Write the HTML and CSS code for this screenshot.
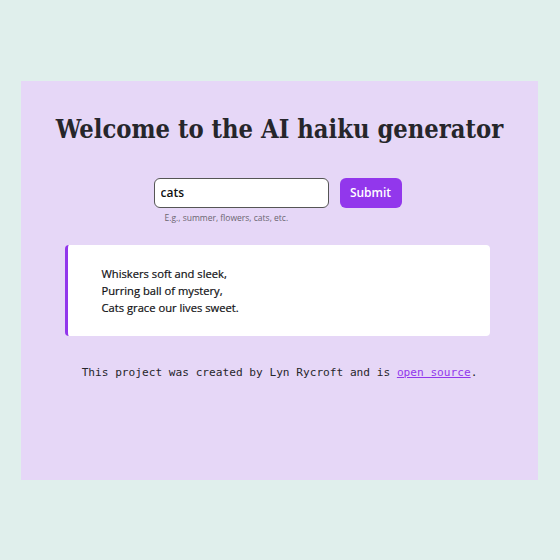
FILE: index.html
```html
<!DOCTYPE html>
<html>
<head>
<meta charset="utf-8">
<link rel="stylesheet" href="styles.css">
</head>
<body>
<main class="panel">
  <h1 class="title">Welcome to the AI haiku generator</h1>
  <form class="form">
    <div class="field">
      <input class="input" type="text" value="cats">
      <span class="hint">E.g., summer, flowers, cats, etc.</span>
    </div>
    <button class="submit" type="button">Submit</button>
  </form>
  <section class="card">
    <p class="haiku">Whiskers soft and sleek,<br>Purring ball of mystery,<br>Cats grace our lives sweet.</p>
  </section>
  <p class="footer">This project was created by Lyn Rycroft and is <a href="#" class="link">open source</a>.</p>
</main>
</body>
</html>
```
FILE: styles.css
```css
html, body { margin: 0; padding: 0; }
body {
  background: #e0efec;
  min-height: 560px;
  display: flex;
  align-items: center;
  justify-content: flex-start;
  padding-left: 21px;
  box-sizing: border-box;
  font-family: "Open Sans", sans-serif;
}
.panel {
  width: 517px;
  height: 399px;
  box-sizing: border-box;
  background: #e6d7f7;
  padding-top: 30px;
  display: flex;
  flex-direction: column;
  align-items: center;
}
.title {
  margin: 0;
  font-family: "DejaVu Serif Condensed", "DejaVu Serif", serif;
  font-stretch: condensed;
  font-weight: bold;
  font-size: 25.3px;
  color: #26262b;
  line-height: 36px;
}
.form {
  margin-top: 31px;
  margin-left: -4px;
  display: flex;
  gap: 11px;
  align-items: flex-start;
}
.field { display: flex; flex-direction: column; align-items: flex-start; }
.input {
  width: 175px;
  height: 30px;
  box-sizing: border-box;
  border: 1.5px solid #555;
  border-radius: 6px;
  padding: 0 6px;
  font-family: "Open Sans", sans-serif;
  font-weight: 600;
  font-size: 12px;
  color: #111;
  background: #fff;
  outline: none;
}
.hint {
  margin-top: 4px;
  margin-left: 11px;
  font-family: "Open Sans", sans-serif;
  font-size: 8.5px;
  color: #6b6570;
}
.submit {
  width: 62px;
  height: 30px;
  border: none;
  border-radius: 6px;
  background: #9237ec;
  color: #fff;
  font-family: "Open Sans", sans-serif;
  font-weight: 600;
  font-size: 12px;
  padding: 0;
}
.card {
  margin-top: 22px;
  width: 425px;
  height: 91px;
  box-sizing: border-box;
  background: #fff;
  border-left: 3px solid #9237ec;
  border-radius: 4px;
  padding: 20px 0 0 34px;
  margin-left: -5px;
}
.haiku {
  margin: 0;
  font-family: "Open Sans", sans-serif;
  font-weight: 500;
  font-size: 11.2px;
  line-height: 17px;
  color: #111114;
  -webkit-text-stroke: 0.2px #111114;
}
.footer {
  margin: 30px 0 0;
  font-family: "DejaVu Sans Mono", monospace;
  font-size: 11.15px;
  color: #26262b;
}
.link { color: #9237ec; text-decoration: underline; }
```
